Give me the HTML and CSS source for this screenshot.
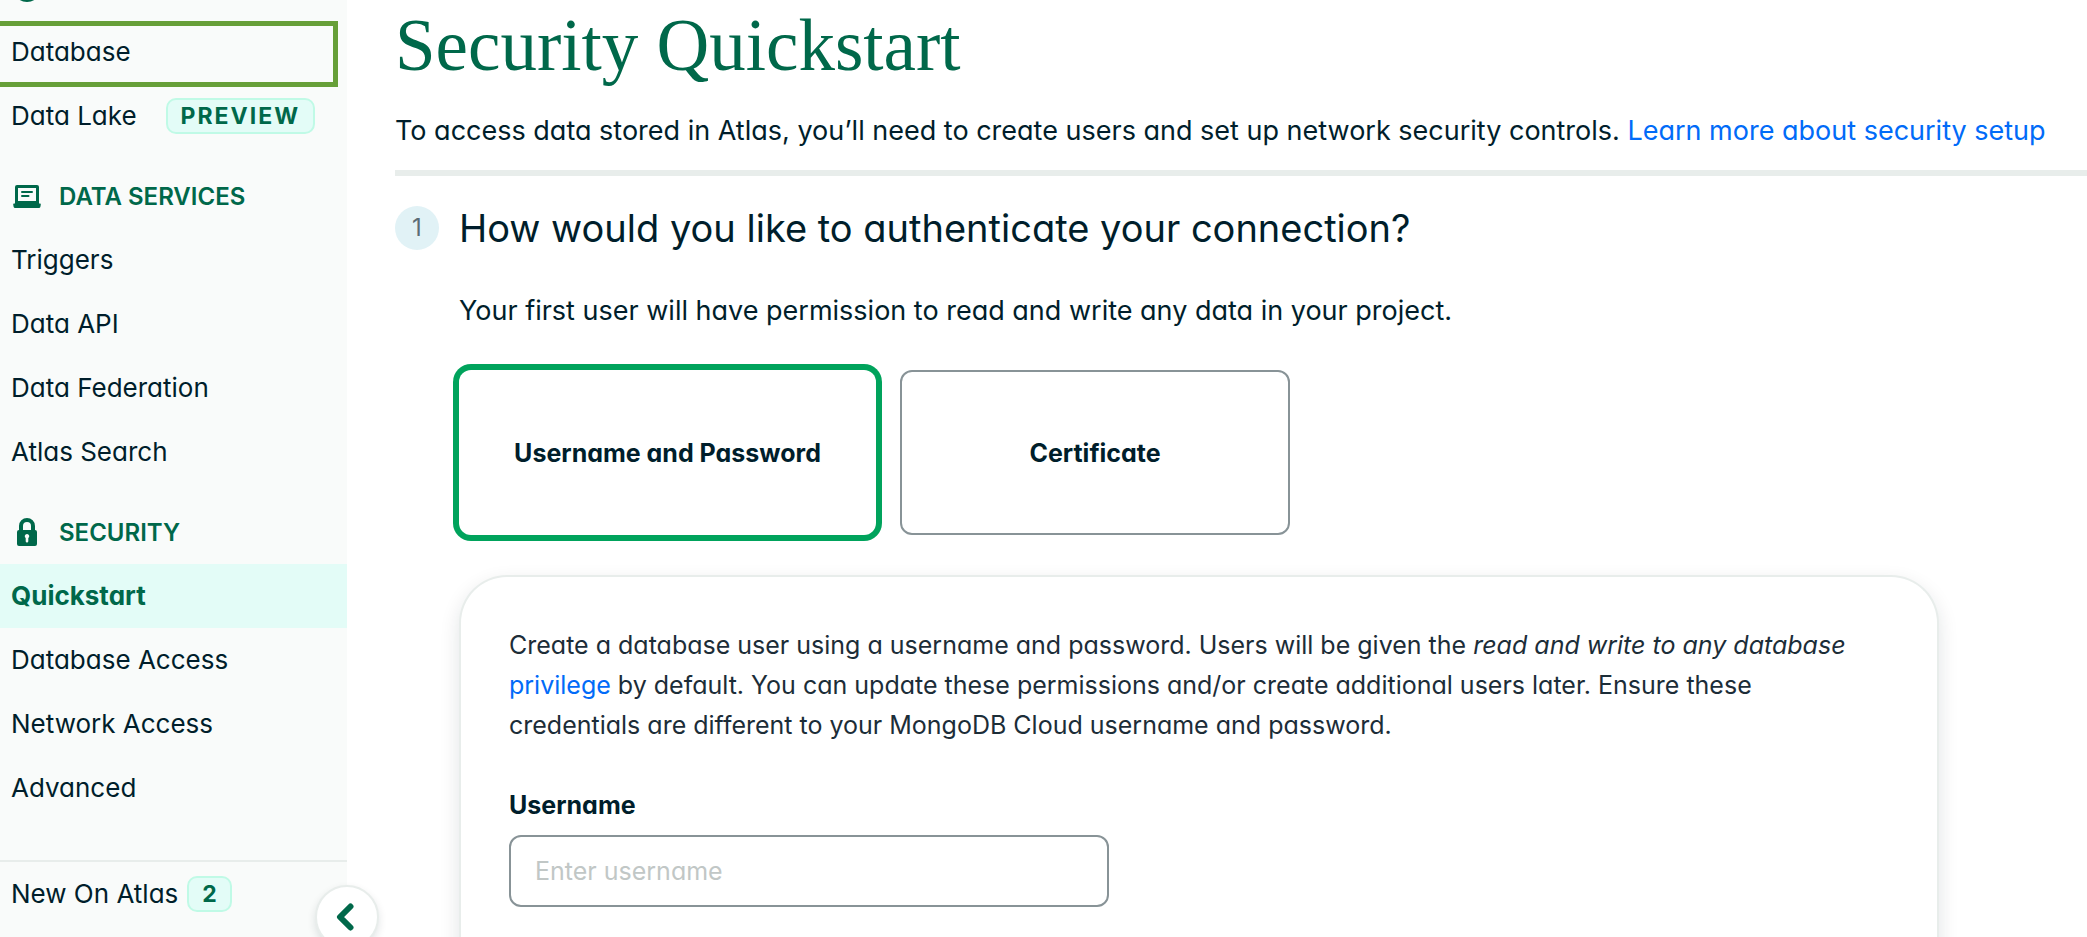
FILE: index.html
```html
<!DOCTYPE html>
<html lang="en">
<head>
<meta charset="utf-8">
<title>Security Quickstart</title>
<link rel="stylesheet" href="styles.css">
</head>
<body>
<div class="app">
  <aside class="sidebar">
    <div class="sidebar-top">
      <svg class="top-icon" viewBox="0 0 28 28" aria-hidden="true"><circle cx="14" cy="14" r="14" fill="#00684a"/></svg>
    </div>
    <nav class="nav" aria-label="Project">
      <a class="nav-item nav-item-marked" href="#">Database</a>
      <a class="nav-item" href="#">Data Lake <span class="badge badge-preview">PREVIEW</span></a>
      <h2 class="nav-heading">
        <svg class="nav-icon" viewBox="0 0 28 28" aria-hidden="true">
          <path fill="#00684a" fill-rule="evenodd" d="M4 3h20a2 2 0 0 1 2 2v16.500h1a.8.8 0 0 1 .8.9l-.4 2.300a1.500 1.500 0 0 1-1.500 1.300H2.100a1.500 1.500 0 0 1-1.500-1.300L.2 22.400a.8.8 0 0 1 .8-.9h1V5a2 2 0 0 1 2-2zM5 6v13h18V6z"/>
          <path d="M9 10h10M9 14h6.500" stroke="#00684a" stroke-width="2" stroke-linecap="round"/>
        </svg>
        DATA SERVICES
      </h2>
      <a class="nav-item" href="#">Triggers</a>
      <a class="nav-item" href="#">Data API</a>
      <a class="nav-item" href="#">Data Federation</a>
      <a class="nav-item" href="#">Atlas Search</a>
      <h2 class="nav-heading">
        <svg class="nav-icon" viewBox="0 0 28 28" aria-hidden="true">
          <path fill="#00684a" fill-rule="evenodd" d="M6 12V8a8 8 0 0 1 16 0v4a2 2 0 0 1 2 2v12a2 2 0 0 1-2 2H6a2 2 0 0 1-2-2V14a2 2 0 0 1 2-2zm4 0h8V8a4 4 0 0 0-8 0zm4 4a2.200 2.200 0 0 0-1.300 4v3.200a1.300 1.300 0 0 0 2.600 0V20A2.200 2.200 0 0 0 14 16z"/>
        </svg>
        SECURITY
      </h2>
      <a class="nav-item nav-item-active" href="#" aria-current="page">Quickstart</a>
      <a class="nav-item" href="#">Database Access</a>
      <a class="nav-item" href="#">Network Access</a>
      <a class="nav-item" href="#">Advanced</a>
    </nav>
    <div class="sidebar-footer">
      <a class="nav-item nav-item-new" href="#">New On Atlas <span class="badge">2</span></a>
    </div>
    <button class="collapse" type="button" aria-label="Collapse navigation">
      <svg class="collapse-icon" viewBox="0 0 28 28" aria-hidden="true"><path d="M17.500 3.500 7 14l10.500 10.500" fill="none" stroke="#00684a" stroke-width="6" stroke-linecap="round" stroke-linejoin="round"/></svg>
    </button>
  </aside>

  <main class="main">
    <header class="page-header">
      <h1 class="title">Security Quickstart</h1>
      <p class="intro">To access data stored in Atlas, you’ll need to create users and set up network security controls. <a class="link" href="#">Learn more about security setup</a></p>
    </header>
    <section class="step">
      <span class="step-number">1</span>
      <div class="step-body">
        <h2 class="step-title">How would you like to authenticate your connection?</h2>
        <p class="step-text">Your first user will have permission to read and write any data in your project.</p>
        <div class="options">
          <button class="option option-selected" type="button" aria-pressed="true">Username and Password</button>
          <button class="option" type="button" aria-pressed="false">Certificate</button>
        </div>
        <form class="card">
          <p class="card-text">Create a database user using a username and password. Users will be given the <em>read and write to any database</em> <a class="link" href="#">privilege</a> by default. You can update these permissions and/or create additional users later. Ensure these credentials are different to your MongoDB Cloud username and password.</p>
          <label class="label" for="username">Username</label>
          <input class="input" id="username" type="text" placeholder="Enter username">
        </form>
      </div>
    </section>
  </main>
</div>
</body>
</html>
```

FILE: styles.css
```css
* {
  box-sizing: border-box;
}

body {
  margin: 0;
  background: #ffffff;
  color: #001e2b;
  font-family: Inter, "Liberation Sans", sans-serif;
  font-feature-settings: "cv11";
  font-size: 25px;
}

h1,
h2,
p {
  margin: 0;
}

button,
input {
  font: inherit;
  font-feature-settings: inherit;
  color: inherit;
}

.app {
  display: flex;
  height: 100vh;
  overflow: hidden;
}

/* Sidebar */

.sidebar {
  position: relative;
  display: flex;
  flex-direction: column;
  flex: none;
  width: 347px;
  background: #f9fbfa;
}

.sidebar-top {
  display: flex;
  align-items: flex-end;
  flex: none;
  height: 20px;
  padding: 0 0 18px 13px;
}

.top-icon {
  flex: none;
  width: 28px;
  height: 28px;
}

.nav-item {
  position: relative;
  display: flex;
  align-items: center;
  height: 64px;
  padding: 0 11px;
  color: #001e2b;
  font-size: 26px;
  line-height: 32px;
  text-decoration: none;
  white-space: nowrap;
}

.nav-item-marked::after {
  content: "";
  position: absolute;
  inset: 1px 9px -3px -5px;
  border: 5px solid #679f38;
}

.nav-item-active {
  background: #e3fcf7;
  color: #00684a;
  font-weight: 700;
}

.nav-heading {
  display: flex;
  align-items: center;
  gap: 18px;
  height: 64px;
  margin-top: 16px;
  padding: 0 13px;
  color: #00684a;
  font-size: 24px;
  font-weight: 600;
}

.nav-icon {
  flex: none;
  width: 28px;
  height: 28px;
}

.badge {
  height: 36px;
  padding: 0 13px;
  border: 2px solid #c0fae6;
  border-radius: 10px;
  background: #e3fcf7;
  color: #00684a;
  font-size: 23px;
  font-weight: 700;
  line-height: 32px;
}

.badge-preview {
  margin-left: auto;
  margin-right: 21px;
  letter-spacing: 2px;
}

.nav-item-new {
  gap: 9px;
}

.sidebar-footer {
  margin-top: auto;
  padding-bottom: 11px;
  border-top: 2px solid #e8edeb;
}

.collapse {
  position: absolute;
  right: -32px;
  bottom: -12px;
  display: flex;
  align-items: center;
  justify-content: center;
  width: 64px;
  height: 64px;
  padding: 0;
  border: 2px solid #e8edeb;
  border-radius: 50%;
  background: #ffffff;
  box-shadow: 0 4px 8px rgba(0, 30, 43, 0.12);
}

.collapse-icon {
  width: 28px;
  height: 28px;
}

/* Main */

.main {
  display: flex;
  flex-direction: column;
  flex: 1;
  min-width: 0;
  padding-left: 48px;
}

.page-header {
  border-bottom: 6px solid #e8edeb;
}

.title {
  padding-top: 4px;
  color: #00684a;
  font-family: "Liberation Serif", serif;
  font-size: 73px;
  font-weight: 400;
  line-height: 84px;
}

.intro {
  padding: 23px 0 19px;
  font-size: 27px;
  line-height: 40px;
}

.link {
  color: #016bf8;
  text-decoration: none;
}

.step {
  display: flex;
  flex: 1;
  gap: 20px;
  padding-top: 30px;
}

.step-number {
  flex: none;
  width: 44px;
  height: 44px;
  border-radius: 50%;
  background: #e1f2f6;
  color: #5c6c75;
  font-size: 24px;
  line-height: 44px;
  text-align: center;
}

.step-body {
  display: flex;
  flex-direction: column;
  flex: 1;
  min-width: 0;
}

.step-title {
  font-size: 38px;
  font-weight: 400;
  line-height: 44px;
}

.step-text {
  padding: 41px 0 39px;
  font-size: 27px;
  line-height: 40px;
}

.options {
  display: flex;
  gap: 24px;
}

.option {
  width: 390px;
  height: 165px;
  border: 2px solid #889397;
  border-radius: 12px;
  background: #ffffff;
  color: #001e2b;
  font-weight: 700;
}

.option-selected {
  width: 417px;
  border-color: transparent;
  box-shadow: 0 0 0 6px #00a35c;
}

.card {
  flex: 1;
  max-width: 1480px;
  margin-top: 40px;
  padding: 48px;
  border: 2px solid #e8edeb;
  border-bottom: 0;
  border-radius: 48px 48px 0 0;
  background: #ffffff;
  box-shadow: 0 8px 20px rgba(0, 30, 43, 0.12);
}

.card-text {
  color: #1c2d38;
  line-height: 40px;
}

.label {
  display: block;
  padding: 40px 0 10px;
  font-weight: 700;
  line-height: 40px;
}

.input {
  display: block;
  width: 600px;
  max-width: 100%;
  height: 72px;
  padding: 0 24px;
  border: 2px solid #889397;
  border-radius: 12px;
  background: #ffffff;
}

.input::placeholder {
  color: #c1c7c6;
  opacity: 1;
}
```
